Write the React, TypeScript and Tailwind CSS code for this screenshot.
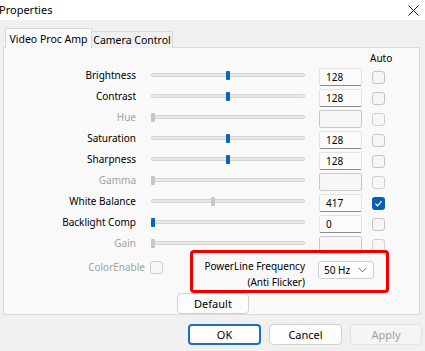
const rows = [
  { label: "Brightness", value: "128", pos: 75, on: true, thumbOn: true, auto: false },
  { label: "Contrast", value: "128", pos: 75, on: true, thumbOn: true, auto: false },
  { label: "Hue", value: "", pos: 0, on: false, thumbOn: false, auto: false },
  { label: "Saturation", value: "128", pos: 75, on: true, thumbOn: true, auto: false },
  { label: "Sharpness", value: "128", pos: 75, on: true, thumbOn: true, auto: false },
  { label: "Gamma", value: "", pos: 0, on: false, thumbOn: false, auto: false },
  { label: "White Balance", value: "417", pos: 60, on: true, thumbOn: false, auto: true },
  { label: "Backlight Comp", value: "0", pos: 0, on: true, thumbOn: true, auto: false },
  { label: "Gain", value: "", pos: 0, on: false, thumbOn: false, auto: false },
];

const Check = ({ checked, dim }: { checked?: boolean; dim?: boolean }) =>
  checked ? (
    <div className="flex h-[13px] w-[13px] items-center justify-center rounded-[3px] bg-[#005fb8]">
      <svg width="9" height="9" viewBox="0 0 9 9">
        <path d="M1.5 4.8 L3.6 6.8 L7.6 2.2" fill="none" stroke="white" strokeWidth="1.2" />
      </svg>
    </div>
  ) : (
    <div
      className={
        "h-[13px] w-[13px] rounded-[3px] border " +
        (dim ? "border-[#cfcfcf] bg-[#f7f7f7]" : "border-[#c4c4c4] bg-[#f6f6f6]")
      }
    />
  );

const Button = ({ children, primary, disabled, w }: { children: string; primary?: boolean; disabled?: boolean; w: string }) => (
  <div
    className={
      "flex h-[21px] items-center justify-center rounded-[4px] text-[11px] " +
      w +
      (primary
        ? " border-2 border-[#1f6cc0] bg-[#fdfdfd] text-black"
        : disabled
          ? " border border-[#e2e2e2] bg-[#f5f5f5] text-[#a0a0a0]"
          : " border border-[#d0d0d0] bg-[#fdfdfd] text-black")
    }
  >
    {children}
  </div>
);

export default function App() {
  return (
    <div
      className="relative flex h-[351px] w-[425px] flex-col overflow-hidden whitespace-nowrap bg-[#f0f0f0] text-[10px] leading-[16px] text-black"
      style={{ fontFamily: '"Noto Sans", "Open Sans", sans-serif' }}
    >
      {/* title bar */}
      <div className="flex h-[20px] items-center justify-between bg-white">
        <span className="-ml-[1px] text-[11px]">Properties</span>
        <svg className="mr-[6px]" width="11" height="11" viewBox="0 0 11 11">
          <path d="M0.5 0.5 L10.5 10.5 M10.5 0.5 L0.5 10.5" stroke="#222" strokeWidth="1" />
        </svg>
      </div>

      {/* tabs */}
      <div className="relative z-10 -mb-px mt-[8px] flex items-end pl-[5px]">
        <div className="flex h-[20px] w-[87px] items-center justify-center border border-b-0 border-[#d9d9d9] bg-[#f9f9f9] text-[10.5px]">
          Video Proc Amp
        </div>
        <div className="flex h-[17px] w-[81px] items-center justify-center border border-b-0 border-l-0 border-[#d9d9d9] bg-[#f0f0f0] text-[10.5px]">
          Camera Control
        </div>
      </div>

      {/* page */}
      <div className="mx-[3px] flex h-[268px] w-[417px] flex-col border border-[#d9d9d9] bg-[#f9f9f9]">
        <div className="mt-[2px] flex h-[16px]">
          <span className="ml-[366px]">Auto</span>
        </div>

        <div className="mt-[2px] flex flex-col gap-[3px]">
          {rows.map((r) => (
            <div key={r.label} className="flex h-[18px] items-center">
              <div
                className={
                  "mb-[4px] w-[132px] text-right " + (r.on ? "text-black" : "text-[#a3a3a3]")
                }
              >
                {r.label}
              </div>
              <div className="relative mb-[4px] ml-[15px] h-[4px] w-[154px] rounded-[2px] border border-[#d4d4d4] bg-[#e9e9e9]">
                <div
                  className={
                    "absolute top-[-3px] h-[9px] w-[4px] rounded-[1px] " +
                    (r.thumbOn ? "bg-[#0067c0]" : "bg-[#c6c6c6]")
                  }
                  style={{ left: r.pos - 1 }}
                />
              </div>
              <div
                className={
                  "ml-[14px] flex h-[18px] w-[43px] items-center rounded-[2px] pl-[6px] " +
                  (r.on
                    ? "border border-[#e3e3e3] border-b-[#8a8a8a] bg-[#fbfbfb]"
                    : "border border-[#c9c9c9] bg-[#f7f7f7]")
                }
              >
                {r.value}
              </div>
              <div className="ml-[10px]">
                <Check checked={r.auto} dim={!r.on} />
              </div>
            </div>
          ))}
        </div>

        {/* bottom controls */}
        <div className="mt-[5px] flex h-[34px] items-start">
          <div className="flex h-[16px] w-[159px] items-center justify-end">
            <span className="text-[#a3a3a3]">ColorEnable</span>
            <div className="ml-[5px]">
              <Check dim />
            </div>
          </div>
          <div className="-mt-[1px] w-[142px] text-right">
            <div>PowerLine Frequency</div>
            <div>(Anti Flicker)</div>
          </div>
          <div className="ml-[13px] mt-[2px] flex h-[18px] w-[56px] items-center justify-between rounded-[3px] border border-[#cfcfcf] bg-[#fdfdfd] pl-[5px] pr-[6px]">
            <span>50 Hz</span>
            <svg width="9" height="6" viewBox="0 0 9 6">
              <path d="M0.5 0.8 L4.5 4.8 L8.5 0.8" fill="none" stroke="#6e6e6e" strokeWidth="1" />
            </svg>
          </div>
        </div>

        <div className="ml-[173px] mt-[1px]">
          <Button w="w-[72px]">Default</Button>
        </div>
      </div>

      {/* dialog buttons */}
      <div className="mt-[9px] flex justify-end gap-[8px] pr-[3px]">
        <Button primary w="w-[73px]">OK</Button>
        <Button w="w-[73px]">Cancel</Button>
        <Button disabled w="w-[72px]">Apply</Button>
      </div>

      {/* red annotation */}
      <div className="pointer-events-none absolute left-[190px] top-[250px] h-[43px] w-[199px] rounded-[4px] border-[3px] border-[#ee0000]" />
    </div>
  );
}
